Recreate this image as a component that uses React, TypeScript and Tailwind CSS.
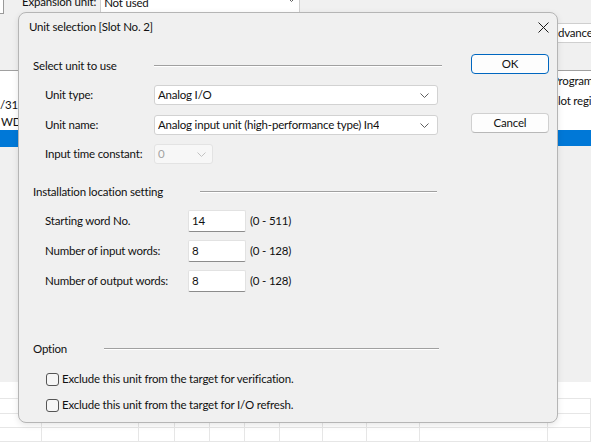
import React from "react";

const Chevron = ({ color = "#5f5f5f" }: { color?: string }) => (
  <svg width="9" height="5" viewBox="0 0 9 5" className="shrink-0">
    <path d="M0.5 0.5 L4.5 4.5 L8.5 0.5" fill="none" stroke={color} strokeWidth="1" />
  </svg>
);

const Section = ({ title, width }: { title: string; width: string }) => (
  <div className={`flex items-center h-[14px] gap-[37px] ${width}`}>
    <span className="whitespace-nowrap">{title}</span>
    <div className="flex-1 h-0 border-t border-[#a0a0a0] border-b border-b-white" />
  </div>
);

const Combo = ({ value, width }: { value: string; width: string }) => (
  <div
    className={`flex items-center justify-between h-[20px] pl-[3px] pr-[8px] bg-white border border-[#d2d2d2] rounded-[3px] ${width}`}
  >
    <span className="truncate">{value}</span>
    <Chevron />
  </div>
);

const WordRow = ({ label, value, range, mt }: { label: string; value: string; range: string; mt: string }) => (
  <div className={`flex items-center pl-[12px] shrink-0 ${mt}`}>
    <span className="w-[143px] whitespace-nowrap">{label}</span>
    <div className="w-[58px] h-[22px] bg-white border border-[#e2e2e2] border-b-[#8c8c8c] rounded-[2px] pl-[3px] pt-[2px] leading-[15px]">
      {value}
    </div>
    <span className="ml-[4px] whitespace-nowrap">{range}</span>
  </div>
);

const CheckRow = ({ label, mt }: { label: string; mt: string }) => (
  <div className={`flex items-center h-[14px] pl-[13px] gap-[3px] shrink-0 ${mt}`}>
    <div className="w-[13px] h-[13px] rounded-[3px] border border-[#555] bg-[#f6f6f6] shrink-0" />
    <span className="whitespace-nowrap">{label}</span>
  </div>
);

const gridCols = ["w-[42px]", "w-[97px]", "w-[36px]", "w-[35px]", "w-[35px]", "w-[35px]", "w-[43px]", "w-[44px]", "w-[53px]", "w-[128px]", "w-[43px]"];

export default function App() {
  return (
    <div
      className="relative w-[591px] h-[442px] bg-[#f0f0f0] overflow-hidden text-[11.5px] tracking-[-0.2px] text-[#111]"
      style={{ fontFamily: 'Lato, "Noto Sans", sans-serif' }}
    >
      {/* background window */}
      <div className="h-[70px] flex items-start">
        <div className="w-[4px] h-[14px] bg-white border-r border-b border-[#9a9a9a]" />
        <span className="ml-[18px] -mt-[6px] leading-[16px] whitespace-nowrap">Expansion unit:</span>
        <div className="ml-[4px] -mt-[8px] w-[200px] h-[21px] bg-white border border-[#cfcfcf] border-b-[#8a8a8a] flex items-center justify-between pl-[3px] pr-[3px]">
          <span className="leading-[14px]">Not used</span>
          <div className="-mt-[6px]">
            <Chevron />
          </div>
        </div>
        <div className="ml-auto mt-[23px] w-[34px] h-[20px] bg-white border-y border-[#cfcfcf] flex items-center overflow-hidden">
          <span className="pl-[1px] whitespace-nowrap">dvance</span>
        </div>
      </div>

      <div className="h-[312px] flex border-t border-[#a0a0a0]">
        <div className="w-[18px] flex flex-col">
          <div className="bg-white h-[59px] flex flex-col justify-end overflow-hidden whitespace-nowrap">
            <span className="h-[17px] leading-[17px]">/31E</span>
            <span className="h-[17px] leading-[17px] pl-[1px]">WD</span>
          </div>
          <div className="h-[17px] bg-[#0078d7]" />
        </div>
        <div className="flex-1" />
        <div className="w-[39px] flex flex-col">
          <div className="bg-white h-[59px] flex flex-col overflow-hidden whitespace-nowrap">
            <span className="h-[20px] leading-[20px]">Program</span>
            <span className="h-[20px] leading-[20px]">Slot regi</span>
          </div>
          <div className="h-[16px] bg-[#0078d7]" />
        </div>
      </div>

      <div className="bg-white h-[60px] flex flex-col">
        <div className="h-[21px] border-b border-[#e6e6e6]" />
        {[0, 1, 2].map((r) => (
          <div key={r} className="h-[17px] flex border-b border-[#e6e6e6]">
            {gridCols.map((w, i) => (
              <div key={i} className={`${w} h-full border-r border-[#e6e6e6]`} />
            ))}
          </div>
        ))}
      </div>

      {/* dialog */}
      <div className="absolute left-[18px] top-[12px] w-[540px] h-[411px] bg-[#f0f0f0] border border-[#b5b5b5] rounded-[8px] shadow-[0_2px_6px_rgba(0,0,0,0.1)] flex flex-col">
        <div className="h-[28px] shrink-0 flex items-center justify-between pl-[10px] pr-[8px]">
          <span className="whitespace-nowrap">Unit selection [Slot No. 2]</span>
          <svg width="11" height="11" viewBox="0 0 11 11">
            <path d="M0.5 0.5 L10.5 10.5 M10.5 0.5 L0.5 10.5" stroke="#1a1a1a" strokeWidth="1" />
          </svg>
        </div>

        <div className="flex pl-[14px]">
          <div className="w-[409px] flex flex-col">
            <div className="mt-[18px]">
              <Section title="Select unit to use" width="w-[409px]" />
            </div>
            <div className="flex items-center pl-[12px] mt-[12px]">
              <span className="w-[109px] whitespace-nowrap">Unit type:</span>
              <Combo value="Analog I/O" width="w-[284px]" />
            </div>
            <div className="flex items-center pl-[12px] mt-[10px]">
              <span className="w-[109px] whitespace-nowrap">Unit name:</span>
              <Combo value="Analog input unit (high-performance type) In4" width="w-[284px]" />
            </div>
            <div className="flex items-center pl-[12px] mt-[9px]">
              <span className="w-[109px] whitespace-nowrap">Input time constant:</span>
              <div className="w-[59px] h-[20px] flex items-center justify-between pl-[3px] pr-[6px] bg-[#f7f7f7] border border-[#e3e3e3] rounded-[3px] text-[#a3a3a3]">
                <span>0</span>
                <Chevron color="#c2c2c2" />
              </div>
            </div>

            <div className="mt-[21px]">
              <Section title="Installation location setting" width="w-[404px]" />
            </div>
            <WordRow label="Starting word No." value="14" range="(0 - 511)" mt="mt-[11px]" />
            <WordRow label="Number of input words:" value="8" range="(0 - 128)" mt="mt-[8px]" />
            <WordRow label="Number of output words:" value="8" range="(0 - 128)" mt="mt-[8px]" />

            <div className="mt-[50px]">
              <Section title="Option" width="w-[406px]" />
            </div>
            <CheckRow label="Exclude this unit from the target for verification." mt="mt-[16px]" />
            <CheckRow label="Exclude this unit from the target for I/O refresh." mt="mt-[12px]" />
          </div>

          <div className="ml-[29px] w-[78px] flex flex-col">
            <button className="mt-[13px] h-[20px] bg-[#fdfdfd] border border-[#0067c0] rounded-[4px] flex items-center justify-center">
              OK
            </button>
            <button className="mt-[39px] h-[20px] bg-[#fdfdfd] border border-[#d0d0d0] border-b-[#b8b8b8] rounded-[4px] flex items-center justify-center">
              Cancel
            </button>
          </div>
        </div>
      </div>
    </div>
  );
}
